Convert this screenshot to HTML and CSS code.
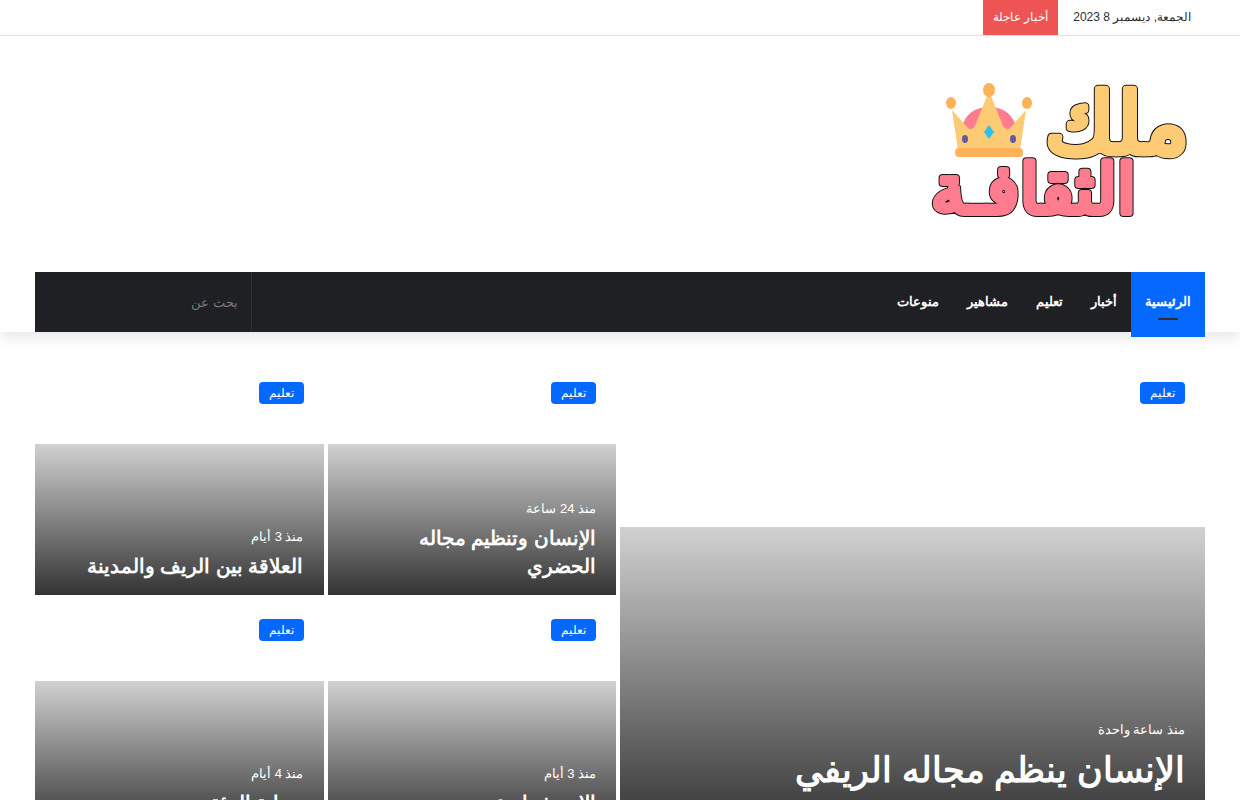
FILE: index.html
```html
<!DOCTYPE html>
<html lang="ar" dir="rtl">
<head>
  <meta charset="UTF-8">
  <meta name="viewport" content="width=device-width, initial-scale=1.0">
  <title>ملك الثقافة</title>
  <link rel="stylesheet" href="styles.css">
</head>
<body>
  <header class="site-header">
    <!-- Top bar -->
    <div class="top-bar">
      <div class="container top-bar-row">
        <span class="today">الجمعة, ديسمبر 8 2023</span>
        <span class="breaking">أخبار عاجلة</span>
      </div>
    </div>

    <!-- Logo -->
    <div class="container logo-row">
      <a href="#" class="logo" aria-label="ملك الثقافة">
        <svg width="260" height="156" viewBox="0 0 260 156" direction="rtl">
          <defs>
            <text id="word-king" x="260" y="77">ملك</text>
            <text id="word-culture" x="207" y="137">الثقافـة</text>
          </defs>
          <!-- Crown -->
          <path d="M32 53 Q38 31 60 31 Q82 31 88 53 L84 62 H36 Z" fill="#ff7b8e"/>
          <path d="M23 34 L38 51 Q42 56 46 50 L58 20 H62 L74 50 Q78 56 82 51 L97 34 L91 74 H29 Z" fill="#fdcb73"/>
          <rect x="26" y="72" width="68" height="9" rx="4" fill="#ffb258"/>
          <ellipse cx="60" cy="14" rx="6" ry="7" fill="#ffb258"/>
          <ellipse cx="22" cy="27" rx="5" ry="6" fill="#ffb258"/>
          <ellipse cx="98" cy="27" rx="5" ry="6" fill="#ffb258"/>
          <path d="M60 49 L65 56 L60 63 L55 56 Z" fill="#2fc0ee"/>
          <ellipse cx="36" cy="63" rx="3" ry="4" fill="#5d5ba5"/>
          <ellipse cx="84" cy="63" rx="3" ry="4" fill="#5d5ba5"/>
          <!-- Lettering: dark outline below, colour on top -->
          <g class="word king">
            <use href="#word-king" class="outline"/>
            <use href="#word-king" class="face"/>
          </g>
          <g class="word culture">
            <use href="#word-culture" class="outline"/>
            <use href="#word-culture" class="face"/>
          </g>
        </svg>
      </a>
    </div>

    <!-- Main menu -->
    <nav class="container">
      <div class="main-nav">
        <ul class="menu">
          <li class="current"><a href="#">الرئيسية</a></li>
          <li><a href="#">أخبار</a></li>
          <li><a href="#">تعليم</a></li>
          <li><a href="#">مشاهير</a></li>
          <li><a href="#">منوعات</a></li>
        </ul>
        <form class="search">
          <input type="text" placeholder="بحث عن" aria-label="بحث عن">
        </form>
      </div>
    </nav>
  </header>

  <!-- Featured posts -->
  <main class="container featured">
    <article class="post post-large">
      <a href="#" class="category">تعليم</a>
      <div class="overlay">
        <span class="date">منذ ساعة واحدة</span>
        <h2><a href="#">الإنسان ينظم مجاله الريفي</a></h2>
        <p class="excerpt">الإنسان ينظم مجاله الريفي</p>
      </div>
    </article>
    <article class="post">
      <a href="#" class="category">تعليم</a>
      <div class="overlay">
        <span class="date">منذ 24 ساعة</span>
        <h2><a href="#">الإنسان وتنظيم مجاله الحضري</a></h2>
      </div>
    </article>
    <article class="post">
      <a href="#" class="category">تعليم</a>
      <div class="overlay">
        <span class="date">منذ 3 أيام</span>
        <h2><a href="#">العلاقة بين الريف والمدينة</a></h2>
      </div>
    </article>
    <article class="post">
      <a href="#" class="category">تعليم</a>
      <div class="overlay">
        <span class="date">منذ 3 أيام</span>
        <h2><a href="#">الاستشعار عن</a></h2>
      </div>
    </article>
    <article class="post">
      <a href="#" class="category">تعليم</a>
      <div class="overlay">
        <span class="date">منذ 4 أيام</span>
        <h2><a href="#">حماية البيئة</a></h2>
      </div>
    </article>
  </main>
</body>
</html>
```
FILE: styles.css
```css
* {
  box-sizing: border-box;
}
body {
  margin: 0;
  font-family: "Liberation Sans";
  font-size: 13px;
  line-height: 21px;
  color: #2c2f34;
  background: #fff;
  overflow-x: hidden;
}
a {
  color: inherit;
  text-decoration: none;
}
.container {
  max-width: 1200px;
  margin: 0 auto;
  padding: 0 15px;
}

/* Header */
.site-header {
  position: relative;
  box-shadow: 0 5px 15px rgba(0, 0, 0, 0.1);
}
.top-bar {
  border-bottom: 1px solid #e1e1e1;
  font-size: 12px;
  line-height: 35px;
}
.top-bar-row {
  display: flex;
  gap: 15px;
}
.today {
  padding-right: 14px;
}
.breaking {
  padding: 0 10px;
  color: #fff;
  background: #ef5455;
}
.logo-row {
  padding-top: 40px;
  padding-bottom: 40px;
}
.logo {
  display: block;
  width: 260px;
  margin-right: 16px;
}
.logo svg {
  display: block;
  overflow: visible;
}
.word {
  font-weight: bold;
  stroke-linejoin: round;
}
.king {
  font-size: 84px;
  fill: #fdcb73;
}
.culture {
  font-size: 68px;
  fill: #ff7b8e;
}
.outline {
  stroke: #111;
  stroke-width: 6px;
}
.king .face {
  stroke: #fdcb73;
  stroke-width: 4px;
}
.culture .face {
  stroke: #ff7b8e;
  stroke-width: 4px;
}

/* Menu */
.main-nav {
  display: flex;
  justify-content: space-between;
  height: 60px;
  background: #1f2024;
}
.menu {
  display: flex;
  margin: 0;
  padding: 0;
  list-style: none;
}
.menu a {
  display: block;
  padding: 0 14px;
  color: #fff;
  font-weight: bold;
  line-height: 60px;
}
.menu .current a {
  position: relative;
  height: 65px;
  background: #0669ff;
}
.menu .current a::after {
  content: "";
  position: absolute;
  top: 46px;
  left: 50%;
  width: 20px;
  height: 2px;
  margin-left: -10px;
  border-radius: 2px;
  background: #2c2f34;
}
.search {
  display: flex;
  border-right: 1px solid #2e2f33;
}
.search input {
  width: 216px;
  padding: 0 13px;
  border: 0;
  outline: 0;
  font: inherit;
  color: #fff;
  background: transparent;
}
.search input::placeholder {
  color: #77787b;
  opacity: 1;
}

/* Featured grid */
.featured {
  display: grid;
  grid-template-columns: 50% 1fr 1fr;
  grid-auto-rows: 233px;
  gap: 4px;
  margin-top: 30px;
}
.post {
  display: flex;
  flex-direction: column;
  justify-content: space-between;
  align-items: flex-start;
  padding-top: 20px;
}
.post-large {
  grid-row: span 2;
}
.category {
  margin-right: 20px;
  padding: 0 10px;
  border-radius: 4px;
  color: #fff;
  background: #0669ff;
  font-size: 12px;
  line-height: 22px;
}
.overlay {
  display: flex;
  flex-direction: column;
  justify-content: flex-end;
  width: 100%;
  height: 151px;
  padding: 15px 20px;
  color: #fff;
  background: linear-gradient(to top, rgba(0, 0, 0, 0.8), rgba(0, 0, 0, 0.18));
}
.post-large .overlay {
  height: 305px;
}
.overlay h2 {
  margin: 5px 0 0;
  font-size: 20px;
  line-height: 28px;
}
.post-large h2 {
  font-size: 35px;
  line-height: 50px;
}
.excerpt {
  margin: 2px 0 0;
  line-height: 20px;
  opacity: 0.9;
}

@media (max-width: 800px) {
  .featured {
    grid-template-columns: 1fr 1fr;
  }
  .post-large {
    grid-column: span 2;
  }
}
```
